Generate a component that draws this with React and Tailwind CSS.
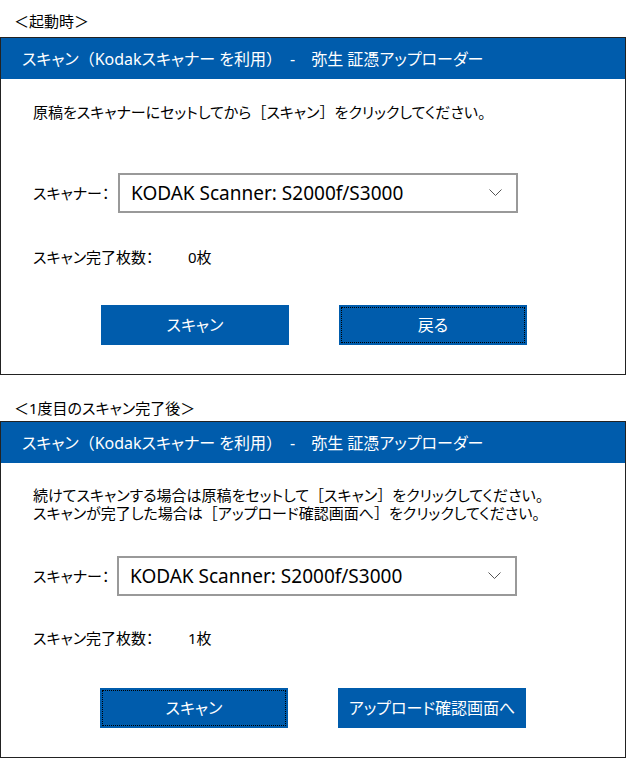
import React from "react";

const BLUE = "bg-[#005cac]";

// full-width brackets keep their width (no palt)
function W({ children }) {
  return <span className="[font-feature-settings:normal]">{children}</span>;
}

function Chevron() {
  return (
    <svg width="13" height="8" viewBox="0 0 13 8" className="text-[#555]">
      <path d="M0.5 0.5 L6.5 6.5 L12.5 0.5" fill="none" stroke="currentColor" strokeWidth="1" />
    </svg>
  );
}

function ScannerSelect() {
  return (
    <div className="flex items-center w-[400px] h-[40px] border-2 border-[#999] bg-white pl-[11px] pr-[14px]">
      <span className="flex-1 text-[19px] text-black font-normal">KODAK Scanner: S2000f/S3000</span>
      <Chevron />
    </div>
  );
}

function Btn({ children, focused }) {
  return (
    <button
      className={`w-[188px] h-[40px] ${BLUE} text-white text-[16px] ${focused ? "outline-1 outline-dotted outline-black outline-offset-[-3px]" : ""}`}
    >
      {children}
    </button>
  );
}

function Window({ children }) {
  return (
    <div className="w-[626px] border border-[#222] bg-white">
      <div className={`${BLUE} h-[41px] flex items-center pl-[21px] text-white text-[16px]`}>
        <span>
          スキャン<W>（</W>Kodakスキャナー を利用<W>）</W>　-　弥生 証憑アップローダー
        </span>
      </div>
      {children}
    </div>
  );
}

export default function App() {
  return (
    <div className="w-[627px] h-[759px] bg-white text-black font-['Noto_Sans','Noto_Sans_CJK_JP',sans-serif] [font-feature-settings:'palt'] overflow-hidden">
      <div className="h-[37px] pl-[14px] pt-[11px] text-[15px] leading-[20px]">＜起動時＞</div>
      <Window>
        <div className="pl-[32px] pb-[29px]">
          <div className="mt-[23px] text-[15px] leading-[20px]">
            原稿をスキャナーにセットしてから<W>［</W>スキャン<W>］</W>をクリックしてください。
          </div>
          <div className="mt-[51px] flex items-center">
            <span className="w-[85px] text-[15px]">スキャナー：</span>
            <ScannerSelect />
          </div>
          <div className="mt-[34px] flex items-center text-[15px] leading-[20px]">
            <span className="w-[155px]">スキャン完了枚数：</span>
            <span>0枚</span>
          </div>
          <div className="mt-[38px] pl-[68px] flex gap-[50px]">
            <Btn>スキャン</Btn>
            <Btn focused>戻る</Btn>
          </div>
        </div>
      </Window>
      <div className="h-[46px] pl-[14px] pt-[23px] text-[15px] leading-[20px]">＜1度目のスキャン完了後＞</div>
      <Window>
        <div className="pl-[32px] pb-[29px]">
          <div className="mt-[23px] text-[15px] leading-[18px]">
            <div>
              続けてスキャンする場合は原稿をセットして<W>［</W>スキャン<W>］</W>をクリックしてください。
            </div>
            <div>
              スキャンが完了した場合は<W>［</W>アップロード確認画面へ<W>］</W>をクリックしてください。
            </div>
          </div>
          <div className="mt-[34px] flex items-center">
            <span className="w-[84px] text-[15px]">スキャナー：</span>
            <ScannerSelect />
          </div>
          <div className="mt-[32px] flex items-center text-[15px] leading-[20px]">
            <span className="w-[155px]">スキャン完了枚数：</span>
            <span>1枚</span>
          </div>
          <div className="mt-[40px] pl-[67px] flex gap-[50px]">
            <Btn focused>スキャン</Btn>
            <Btn>アップロード確認画面へ</Btn>
          </div>
        </div>
      </Window>
    </div>
  );
}
